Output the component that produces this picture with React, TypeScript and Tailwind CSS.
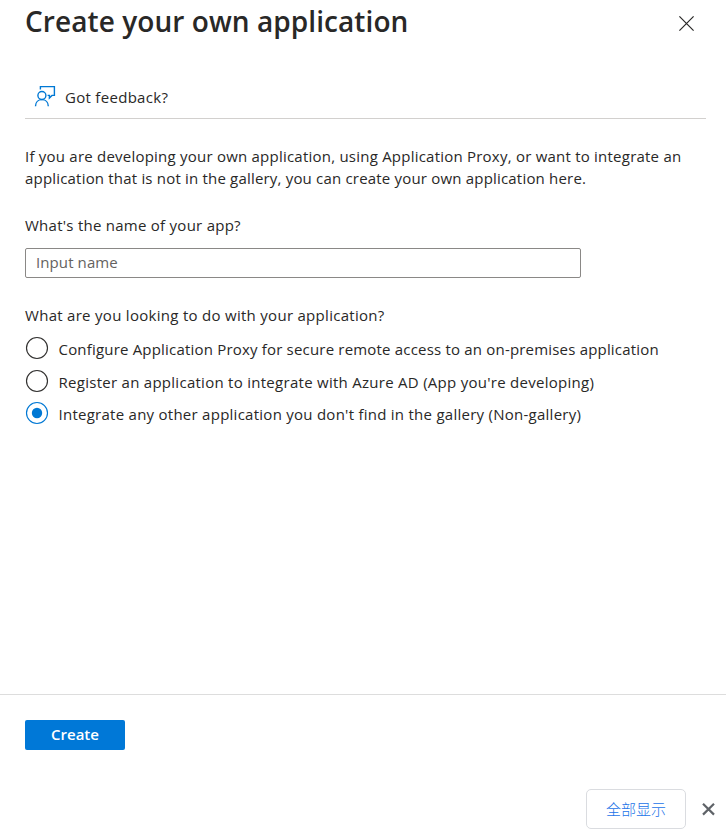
import { useState } from "react";

const options = [
  {
    label: "Configure Application Proxy for secure remote access to an on-premises application",
    row: "h-[33px]",
    text: "tracking-[0.19px]",
  },
  {
    label: "Register an application to integrate with Azure AD (App you're developing)",
    row: "h-[32px]",
    text: "tracking-[0.275px]",
  },
  {
    label: "Integrate any other application you don't find in the gallery (Non-gallery)",
    row: "h-[32px]",
    text: "tracking-[0.26px]",
  },
];

function FeedbackIcon() {
  return (
    <svg width="22" height="22" viewBox="0 0 22 22" fill="none" stroke="#0078d4" strokeWidth="1.4">
      <path d="M6.4 4.4V1.6H20.4V10.4H18L15.4 13V10.4H13.6" />
      <circle cx="7.9" cy="10.5" r="4" />
      <path d="M1.5 21.2C1.5 17.2 4.3 14.6 7.9 14.6S14.3 17.2 14.3 21.2" />
    </svg>
  );
}

export default function App() {
  const [selected, setSelected] = useState(2);
  return (
    <div className="flex h-[840px] w-[726px] flex-col overflow-hidden bg-white font-['Open_Sans',sans-serif] text-[15px] leading-[22px] text-[#292827]">
      <main className="flex h-[694px] flex-col pr-5 pl-[25px]">
        <header className="flex h-[85px] items-start justify-between">
          <h1 className="mt-[3px] text-[28px] leading-9 font-semibold tracking-[0.07px] whitespace-nowrap">Create your own application</h1>
          <button aria-label="Close" className="mt-4 mr-3">
            <svg width="15" height="15" viewBox="0 0 15 15" stroke="#292827" strokeWidth="1.2">
              <path d="M0.4 0.4L14.6 14.6M14.6 0.4L0.4 14.6" />
            </svg>
          </button>
        </header>
        <div className="flex h-[34px] items-start gap-[9px] border-b border-[#d2d0ce] pl-[9px]">
          <FeedbackIcon />
          <span className="mt-px tracking-[0.3px] whitespace-nowrap">Got feedback?</span>
        </div>
        <p className="mt-[26px] whitespace-nowrap">
          <span className="block tracking-[0.225px]">If you are developing your own application, using Application Proxy, or want to integrate an</span>
          <span className="block tracking-[0.19px]">application that is not in the gallery, you can create your own application here.</span>
        </p>
        <label className="mt-[25px] tracking-[0.26px] whitespace-nowrap" htmlFor="name">What's the name of your app?</label>
        <input
          id="name"
          placeholder="Input name"
          className="mt-[12px] h-[30px] w-[556px] rounded-[2px] border border-[#8a8886] px-[10px] pb-[3px] tracking-[0.1px] outline-none placeholder:text-[#646260]"
        />
        <div className="mt-[26px] tracking-[0.29px] whitespace-nowrap">What are you looking to do with your application?</div>
        <div role="radiogroup" className="mt-[10px] flex flex-col">
          {options.map((option, i) => (
            <div key={option.label} role="radio" aria-checked={i === selected} onClick={() => setSelected(i)} className={`flex items-start ${option.row}`}>
              <svg width="24" height="24" viewBox="0 0 24 24" fill="none">
                <circle cx="12" cy="12" r="10.5" stroke={i === selected ? "#0078d4" : "#323130"} strokeWidth="1.15" />
                {i === selected && <circle cx="12" cy="12" r="5.2" fill="#0078d4" />}
              </svg>
              <span className={`mt-[2px] ml-[9.5px] whitespace-nowrap ${option.text}`}>{option.label}</span>
            </div>
          ))}
        </div>
      </main>
      <footer className="flex h-[88px] items-start border-t border-[#dddddd] pt-[25px] pl-[25px]">
        <button className="h-[30px] w-[100px] rounded-[2px] bg-[#0078d7] pb-[3px] font-semibold text-white">Create</button>
      </footer>
      <div className="flex h-[58px] items-start justify-end gap-4 pt-[7px] pr-3">
        <button className="h-10 w-[100px] rounded-[5px] border border-[#dadce0] font-['Noto_Sans_CJK_SC',sans-serif] font-light text-[#1a73e8]">全部显示</button>
        <button aria-label="Dismiss" className="mt-[14px]">
          <svg width="12" height="12" viewBox="0 0 12 12" stroke="#5f6368" strokeWidth="2.2" className="overflow-visible">
            <path d="M1 0.8L12 11.6M12 0.8L1 11.6" />
          </svg>
        </button>
      </div>
    </div>
  );
}
